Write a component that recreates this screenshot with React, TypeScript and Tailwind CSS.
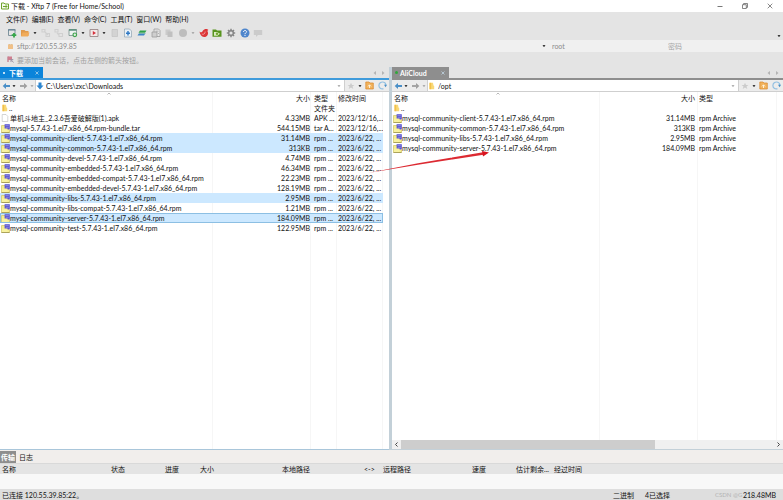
import { ReactNode } from 'react';
import { clsx } from 'clsx';

type FileEntry = {
  name: string;
  size?: string;
  type?: string;
  date?: string;
  icon: 'folder' | 'page' | 'archive';
  selected?: boolean;
  focused?: boolean;
};

const LOCAL_FILES: FileEntry[] = [
  { name: '..', type: '文件夹', icon: 'folder' },
  { name: '单机斗地主_2.3.6吾爱破解版(1).apk', size: '4.33MB', type: 'APK ...', date: '2023/12/16,...', icon: 'page' },
  { name: 'mysql-5.7.43-1.el7.x86_64.rpm-bundle.tar', size: '544.15MB', type: 'tar A...', date: '2023/12/16,...', icon: 'archive' },
  { name: 'mysql-community-client-5.7.43-1.el7.x86_64.rpm', size: '31.14MB', type: 'rpm ...', date: '2023/6/22, ...', icon: 'archive', selected: true },
  { name: 'mysql-community-common-5.7.43-1.el7.x86_64.rpm', size: '313KB', type: 'rpm ...', date: '2023/6/22, ...', icon: 'archive', selected: true },
  { name: 'mysql-community-devel-5.7.43-1.el7.x86_64.rpm', size: '4.74MB', type: 'rpm ...', date: '2023/6/22, ...', icon: 'archive' },
  { name: 'mysql-community-embedded-5.7.43-1.el7.x86_64.rpm', size: '46.34MB', type: 'rpm ...', date: '2023/6/22, ...', icon: 'archive' },
  { name: 'mysql-community-embedded-compat-5.7.43-1.el7.x86_64.rpm', size: '22.23MB', type: 'rpm ...', date: '2023/6/22, ...', icon: 'archive' },
  { name: 'mysql-community-embedded-devel-5.7.43-1.el7.x86_64.rpm', size: '128.19MB', type: 'rpm ...', date: '2023/6/22, ...', icon: 'archive' },
  { name: 'mysql-community-libs-5.7.43-1.el7.x86_64.rpm', size: '2.95MB', type: 'rpm ...', date: '2023/6/22, ...', icon: 'archive', selected: true },
  { name: 'mysql-community-libs-compat-5.7.43-1.el7.x86_64.rpm', size: '1.21MB', type: 'rpm ...', date: '2023/6/22, ...', icon: 'archive' },
  { name: 'mysql-community-server-5.7.43-1.el7.x86_64.rpm', size: '184.09MB', type: 'rpm ...', date: '2023/6/22, ...', icon: 'archive', selected: true, focused: true },
  { name: 'mysql-community-test-5.7.43-1.el7.x86_64.rpm', size: '122.95MB', type: 'rpm ...', date: '2023/6/22, ...', icon: 'archive' },
];

const REMOTE_FILES: FileEntry[] = [
  { name: '..', icon: 'folder' },
  { name: 'mysql-community-client-5.7.43-1.el7.x86_64.rpm', size: '31.14MB', type: 'rpm Archive', icon: 'archive' },
  { name: 'mysql-community-common-5.7.43-1.el7.x86_64.rpm', size: '313KB', type: 'rpm Archive', icon: 'archive' },
  { name: 'mysql-community-libs-5.7.43-1.el7.x86_64.rpm', size: '2.95MB', type: 'rpm Archive', icon: 'archive' },
  { name: 'mysql-community-server-5.7.43-1.el7.x86_64.rpm', size: '184.09MB', type: 'rpm Archive', icon: 'archive' },
];

const MENUS = ['文件(F)', '编辑(E)', '查看(V)', '命令(C)', '工具(T)', '窗口(W)', '帮助(H)'];

export default function App() {
  return (
    <div className="flex h-screen flex-col overflow-hidden bg-[#e4e4e4] font-['Lato','Noto_Sans_CJK_SC',sans-serif] text-[7px] leading-[10px] text-[#111]">
      <TitleBar />
      <nav className="flex h-[14px] shrink-0 items-center gap-[4px] pl-[6px]">
        {MENUS.map((menu) => (
          <button key={menu} className="whitespace-nowrap">
            {menu}
          </button>
        ))}
      </nav>
      <Toolbar />
      <SessionBar />
      <div className="flex h-[15px] shrink-0 items-center gap-[3px] pl-[7px] text-[#a0a0a0]">
        <FlagIcon />
        <span>要添加当前会话，点击左侧的箭头按钮。</span>
      </div>

      <main className="relative flex min-h-0 flex-1">
        <section className="flex min-w-0 flex-[389] flex-col border-b border-[#a9c6da]">
          <TabStrip title="下载" active />
          <PathBar path="C:\Users\zxc\Downloads" icon={<DownArrowIcon />} label="本地路径" />
          <div className="relative min-h-0 flex-1 bg-white pr-[6px]">
            <ColumnLines columns={['w-[213px]', 'flex-1', 'w-[26px]', 'w-[46px]']} />
            <LocalTable />
          </div>
        </section>
        <div className="w-[3px] shrink-0 bg-[#c3d0d8]" />
        <section className="flex min-w-0 flex-[391] flex-col">
          <TabStrip title="AliCloud" />
          <PathBar path="/opt" icon={<FolderIcon />} label="远程路径" />
          <div className="relative min-h-0 flex-1 bg-white">
            <ColumnLines columns={['w-[208px]', 'w-[98px]', 'flex-1']} />
            <RemoteTable />
          </div>
          <ScrollBar />
        </section>
        <DragArrow />
      </main>

      <TransferPanel />
      <StatusBar />
    </div>
  );
}

function TitleBar() {
  return (
    <header className="flex h-[12px] shrink-0 items-center bg-white">
      <AppIcon />
      <h1 className="ml-[2px] flex-1">下载 - Xftp 7 (Free for Home/School)</h1>
      <div className="flex items-center gap-[19px] pr-[10px] text-[#555]">
        <button aria-label="最小化">
          <svg className="size-[6px]" viewBox="0 0 6 6" stroke="currentColor" fill="none">
            <path d="M0.5 3.5H5.5" strokeWidth="0.8" />
          </svg>
        </button>
        <button aria-label="还原">
          <svg className="size-[6px]" viewBox="0 0 6 6" stroke="currentColor" fill="none" strokeWidth="0.7">
            <path d="M0.5 1.7H4.3V5.5H0.5ZM1.6 1.7V0.5H5.5V4.4H4.3" />
          </svg>
        </button>
        <button aria-label="关闭">
          <svg className="size-[6px]" viewBox="0 0 6 6" stroke="currentColor" fill="none" strokeWidth="0.7">
            <path d="M0.7 0.7L5.3 5.3M5.3 0.7L0.7 5.3" />
          </svg>
        </button>
      </div>
    </header>
  );
}

function Toolbar() {
  return (
    <div className="flex h-[14px] shrink-0 items-center gap-1 pl-[7px]">
      <ToolGroup>
        <ToolButton label="新建">
          <path d="M1.5 1.5H8V6.5M1.5 1.5V7.5H5" stroke="#7f949e" fill="none" />
          <path d="M1 2H8.5" stroke="#5f7f92" />
          <path d="M7 5V9.5M4.7 7.2H9.3" stroke="#35a648" strokeWidth="1.8" />
        </ToolButton>
        <ToolButton label="打开">
          <path d="M1 2H4.5L5.5 3H8.5V8H1Z" fill="#e09a4c" />
          <path d="M2.5 4.5H9.5L8 8.5H1Z" fill="#f1ab59" />
        </ToolButton>
        <Caret />
      </ToolGroup>
      <ToolGroup>
        <ToolButton label="重新连接">
          <path d="M1 1.5H4V4H1ZM5 5.5H8.5V8.5H5ZM3 3L7 7" stroke="#d0d0d0" fill="none" strokeWidth="1.1" />
        </ToolButton>
        <ToolButton label="断开">
          <path d="M1 1.5H4V4H1ZM5 5.5H8.5V8.5H5ZM3 5L5 7" stroke="#d0d0d0" fill="none" strokeWidth="1.1" />
        </ToolButton>
      </ToolGroup>
      <ToolGroup>
        <ToolButton label="属性">
          <path d="M1 1.5H8.5V7.5H1Z" fill="#eef3f2" stroke="#77918b" strokeWidth="0.8" />
          <path d="M1 2H8.5" stroke="#4f8a75" strokeWidth="1.4" />
          <circle cx="6.8" cy="6.8" r="1.8" fill="#dff0df" stroke="#3fa34e" strokeWidth="1.2" />
        </ToolButton>
        <Caret />
      </ToolGroup>
      <ToolGroup>
        <ToolButton label="执行">
          <path d="M1 1.5H9V8.5H1Z" fill="#f3e8e8" stroke="#9a8888" strokeWidth="0.9" />
          <path d="M3.8 3V7L7 5Z" fill="#d5303b" />
        </ToolButton>
        <Caret />
      </ToolGroup>
      <ToolGroup>
        <ToolButton label="复制">
          <path d="M2 1.5H7.5V8.5H2Z" fill="#d3d3d3" stroke="#c3c3c3" strokeWidth="0.7" />
        </ToolButton>
        <ToolButton label="传输">
          <path d="M1.5 1H6.5L8.5 3V9H1.5Z" fill="#e9f1f7" stroke="#8fa3b2" strokeWidth="0.7" />
          <path d="M5 3V7.5M3 5.2H7" stroke="#2f78c4" strokeWidth="1.4" />
        </ToolButton>
      </ToolGroup>
      <ToolGroup>
        <ToolButton label="同步">
          <path d="M3 2.5H9.5L8 4.8H1.5Z" fill="#2ea04a" />
          <path d="M2 5.3H8.5L7 7.6H0.5Z" fill="#3f86c7" />
          <path d="M2 5.3H8.5" stroke="#8fc79c" strokeWidth="0.6" />
        </ToolButton>
      </ToolGroup>
      <ToolGroup>
        <ToolButton label="粘贴">
          <path d="M3 1H7.5L9 2.5V8.5H3Z" fill="#e6e6e6" stroke="#9c9c9c" strokeWidth="0.8" />
          <path d="M1 4H6V9H1Z" fill="#cfcfcf" stroke="#9c9c9c" strokeWidth="0.8" />
          <path d="M4.5 3.2H7.5M7 5.5H8" stroke="#a5a5a5" strokeWidth="0.8" />
        </ToolButton>
        <ToolButton label="删除">
          <path d="M1.5 1.5H6.5V7H1.5Z" fill="#cbcbcb" />
          <path d="M3.5 3.5H8.5V9H3.5Z" fill="#c0c0c0" />
        </ToolButton>
      </ToolGroup>
      <ToolGroup>
        <ToolButton label="停止">
          <circle cx="5" cy="5" r="4" fill="#bdbdbd" />
        </ToolButton>
        <Caret muted />
      </ToolGroup>
      <ToolGroup>
        <ToolButton label="Xshell">
          <path d="M0.5 3.5C2 5 3 4.5 4 2.5C5.2 0.5 8.4 0.4 9.5 2C8.2 2.2 8.4 3.4 9 4.5C9.4 7.2 7.4 9.2 5 9C2.5 8.8 0.8 6.5 0.5 3.5Z" fill="#dc3537" />
          <path d="M2.8 6C4.5 7 6.2 5.8 6.2 3.5" stroke="#f4b5b3" strokeWidth="0.7" fill="none" />
        </ToolButton>
        <ToolButton label="Xftp">
          <path d="M0.5 1.5H4L5 2.5H9.5V8.8H0.5Z" fill="#58941f" />
          <path d="M2 4H5L8 5.8L5.5 7.8H2Z" fill="#dcecc4" />
          <circle cx="5" cy="5.7" r="1.2" fill="#6ea52c" />
        </ToolButton>
      </ToolGroup>
      <ToolGroup>
        <ToolButton label="选项">
          <path d="M5 0.8V9.2M0.8 5H9.2M2 2L8 8M8 2L2 8" stroke="#868686" strokeWidth="1.5" />
          <circle cx="5" cy="5" r="3" fill="#868686" />
          <circle cx="5" cy="5" r="1.6" fill="#e4e4e4" />
        </ToolButton>
      </ToolGroup>
      <ToolGroup>
        <ToolButton label="帮助">
          <circle cx="5" cy="5" r="4.5" fill="#4f86cc" />
          <path d="M3.5 4C3.5 2 6.6 2 6.5 3.9C6.4 4.9 5 4.9 5 6.2M5 7V8" stroke="#fff" strokeWidth="1" fill="none" />
        </ToolButton>
        <ToolButton label="反馈">
          <path d="M0.8 2H9.2V7H5L3 9V7H0.8Z" fill="#cbcbcb" />
        </ToolButton>
      </ToolGroup>
      <div className="ml-auto self-end pr-[2px] pb-[2px]">
        <Caret />
      </div>
    </div>
  );
}

function ToolGroup({ children }: { children: ReactNode }) {
  return <div className="flex items-center gap-[3px]">{children}</div>;
}

function ToolButton({ label, children }: { label: string; children: ReactNode }) {
  return (
    <button aria-label={label}>
      <svg className="size-[10px]" viewBox="0 0 10 10">
        {children}
      </svg>
    </button>
  );
}

function Caret({ muted = false }: { muted?: boolean }) {
  return (
    <svg className={clsx('w-1 h-1 shrink-0', muted ? 'text-[#999]' : 'text-black')} viewBox="0 0 4 4">
      <path d="M0.5 1.2H3.5L2 3Z" fill="currentColor" />
    </svg>
  );
}

function SessionBar() {
  return (
    <form className="flex h-[12px] shrink-0 items-center bg-[#f0f0f0]">
      <div className="flex flex-1 items-center gap-[4px] pl-[8px]">
        <svg className="size-[5px] shrink-0" viewBox="0 0 5 5">
          <path d="M0 1H5V5H0Z" fill="#f0c088" />
          <path d="M1 1V0H4V1" fill="none" stroke="#e0b070" />
        </svg>
        <input
          aria-label="主机"
          defaultValue="sftp://120.55.39.85"
          className="h-[10px] min-w-0 flex-1 text-[#8c8c8c] outline-none"
        />
        <Caret />
      </div>
      <input aria-label="用户名" placeholder="root" className="h-[10px] w-[118px] pl-[6px] outline-none placeholder:text-[#8c8c8c]" />
      <input aria-label="密码" type="password" placeholder="密码" className="h-[10px] w-[119px] pl-[4px] outline-none placeholder:text-[#a5a5a5]" />
    </form>
  );
}

function TabStrip({ title, active = false }: { title: string; active?: boolean }) {
  return (
    <div
      className={clsx(
        'flex h-[13px] shrink-0 items-stretch border-b-2',
        active ? 'border-[#3f9bdb]' : 'border-[#8e8e8e]',
      )}
    >
      <div
        className={clsx(
          'flex items-center pl-[3px] font-bold text-white',
          active ? 'w-[43px] bg-[#0b84da]' : 'w-[57px] bg-[#8e8e8e]',
        )}
      >
        <span className={clsx('rounded-full', active ? 'mr-[4px] size-[2px] bg-white' : 'mr-[2px] size-[3px] bg-[#2fa83c]')} />
        <button className="flex-1 text-left">{title}</button>
        <button aria-label="关闭标签" className="pr-[4px]">
          <svg className="size-[4px]" viewBox="0 0 4 4" stroke="#c5dced" strokeWidth="0.7">
            <path d="M0.5 0.5L3.5 3.5M3.5 0.5L0.5 3.5" />
          </svg>
        </button>
      </div>
      <div className="ml-auto flex items-center gap-[4px] pr-[4px] text-[#b4b4b4]">
        <button aria-label="上一个标签">
          <svg className="size-[4px]" viewBox="0 0 4 4">
            <path d="M3 0V4L0.5 2Z" fill="currentColor" />
          </svg>
        </button>
        <button aria-label="下一个标签">
          <svg className="size-[4px]" viewBox="0 0 4 4">
            <path d="M1 0V4L3.5 2Z" fill="currentColor" />
          </svg>
        </button>
      </div>
    </div>
  );
}

function PathBar({ path, icon, label }: { path: string; icon: ReactNode; label: string }) {
  return (
    <div className="flex h-[12px] shrink-0 items-center border-b border-[#cfcfcf] bg-[#ececec]">
      <div className="flex items-center gap-[2px] pl-[2px]">
        <button aria-label="后退">
          <svg className="size-[8px]" viewBox="0 0 8 8">
            <path d="M4 1L0.7 4L4 7Z" fill="#4a8fc7" />
            <path d="M3 4H8" stroke="#4a8fc7" strokeWidth="2" />
          </svg>
        </button>
        <Caret />
        <button aria-label="前进" className="ml-[2px]">
          <svg className="size-[8px]" viewBox="0 0 8 8">
            <path d="M4 1L7.3 4L4 7Z" fill="#9c9c9c" />
            <path d="M5 4H0" stroke="#a5a5a5" strokeWidth="2" />
          </svg>
        </button>
        <Caret muted />
      </div>
      <div className="ml-px flex h-full min-w-0 flex-1 items-center gap-[2px] border-x border-[#cfcfcf] bg-white pr-[3px]">
        {icon}
        <input aria-label={label} defaultValue={path} className="h-[10px] min-w-0 flex-1 outline-none" />
        <Caret muted />
      </div>
      <div className="flex items-center gap-[3px] px-[2px]">
        <button aria-label="收藏">
          <svg className="size-[8px]" viewBox="0 0 8 8">
            <path d="M4 0.8L5 3H7.4L5.5 4.6L6.3 7.1L4 5.6L1.7 7.1L2.5 4.6L0.6 3H3Z" fill="#cbcbcb" />
          </svg>
        </button>
        <Caret />
        <button aria-label="上级目录">
          <svg className="size-[9px]" viewBox="0 0 9 9">
            <path d="M0.8 1H4L5 2H8.3V8H0.8Z" fill="#f1b25c" stroke="#d8872c" strokeWidth="0.7" />
            <path d="M4.5 7V4M3 5.4L4.5 3.8L6 5.4" stroke="#fff6e3" strokeWidth="0.9" fill="none" />
          </svg>
        </button>
        <button aria-label="刷新" className="ml-px">
          <svg className="size-[9px]" viewBox="0 0 9 9">
            <path d="M5.5 7.7C3 8.5 0.8 6.8 0.9 4.4C1 2 3 0.8 5 1C6.8 1.2 7.8 2.5 7.8 4.2" stroke="#93c0e2" strokeWidth="1.2" fill="none" />
            <path d="M6 3.8H9L7.6 6.2Z" fill="#4a8fc7" />
          </svg>
        </button>
      </div>
    </div>
  );
}

/* Faint rules that run the full height behind a file list */
function ColumnLines({ columns }: { columns: string[] }) {
  return (
    <div className="absolute inset-y-0 left-0 right-[6px] flex" aria-hidden="true">
      {columns.map((width, index) => (
        <div key={index} className={clsx('border-r border-[#f6f6f6]', width)} />
      ))}
    </div>
  );
}

function SortMark() {
  return (
    <svg className="absolute top-0 left-1/2 h-[3px] w-[4px]" viewBox="0 0 4 3">
      <path d="M0.5 2.5L2 1L3.5 2.5" stroke="#999" strokeWidth="0.7" fill="none" />
    </svg>
  );
}

function LocalTable() {
  return (
    <table className="relative w-full table-fixed whitespace-nowrap">
      <colgroup>
        <col className="w-[213px]" />
        <col />
        <col className="w-[25px]" />
        <col className="w-[46px]" />
      </colgroup>
      <thead>
        <tr className="h-[11px] text-left">
          <th className="relative p-0 pl-[2px] font-normal">
            名称
            <SortMark />
          </th>
          <th className="p-0 pr-[2px] text-right font-normal">大小</th>
          <th className="p-0 pl-[2px] font-normal">类型</th>
          <th className="p-0 pl-[1px] font-normal">修改时间</th>
        </tr>
      </thead>
      <tbody>
        {LOCAL_FILES.map((file) => (
          <tr
            key={file.name}
            className={clsx(
              'h-[10px]',
              file.selected && 'bg-[#cce8ff]',
              file.focused && 'outline outline-1 -outline-offset-1 outline-[#8cbfe3]',
            )}
          >
            <td className="p-0">
              <FileName file={file} />
            </td>
            <td className="p-0 pr-[2px] text-right">{file.size}</td>
            <td className="p-0 pl-[2px]">{file.type}</td>
            <td className="overflow-hidden p-0 pl-[1px]">{file.date}</td>
          </tr>
        ))}
      </tbody>
    </table>
  );
}

function RemoteTable() {
  return (
    <table className="relative w-full table-fixed whitespace-nowrap">
      <colgroup>
        <col className="w-[208px]" />
        <col className="w-[97px]" />
        <col />
      </colgroup>
      <thead>
        <tr className="h-[11px] text-left">
          <th className="relative p-0 pl-[2px] font-normal">
            名称
            <SortMark />
          </th>
          <th className="p-0 pr-[2px] text-right font-normal">大小</th>
          <th className="p-0 pl-[2px] font-normal">类型</th>
        </tr>
      </thead>
      <tbody>
        {REMOTE_FILES.map((file) => (
          <tr key={file.name} className="h-[10px]">
            <td className="p-0">
              <FileName file={file} />
            </td>
            <td className="p-0 pr-[2px] text-right">{file.size}</td>
            <td className="p-0 pl-[2px]">{file.type}</td>
          </tr>
        ))}
      </tbody>
    </table>
  );
}

function FileName({ file }: { file: FileEntry }) {
  return (
    <span className="flex h-[10px] items-center pl-[1px]">
      {file.icon === 'folder' && <FolderIcon />}
      {file.icon === 'page' && <PageIcon />}
      {file.icon === 'archive' && <ArchiveIcon />}
      {file.name}
    </span>
  );
}

function ScrollBar() {
  return (
    <div className="flex h-[10px] shrink-0 items-center border-b border-[#c3d0d8] bg-[#f0f0f0] text-[#444]">
      <button aria-label="向左滚动" className="flex w-[9px] justify-center">
        <svg className="size-[5px]" viewBox="0 0 5 5">
          <path d="M3.5 0.5L1.5 2.5L3.5 4.5" stroke="currentColor" fill="none" />
        </svg>
      </button>
      <div className="h-full flex-1">
        <div className="h-full w-[68%] bg-[#cdcdcd]" />
      </div>
      <button aria-label="向右滚动" className="flex w-[9px] justify-center">
        <svg className="size-[5px]" viewBox="0 0 5 5">
          <path d="M1.5 0.5L3.5 2.5L1.5 4.5" stroke="currentColor" fill="none" />
        </svg>
      </button>
    </div>
  );
}

function DragArrow() {
  return (
    <svg className="pointer-events-none absolute top-[84px] left-[368px] h-[22px] w-[121px]" viewBox="0 0 121 22">
      <path d="M0 22L50 12.2L115 1.2L115.5 3.8L50 13.8Z" fill="#dc2a32" />
      <path d="M114 0L121 1.5L115 5.5Z" fill="#d8141f" />
    </svg>
  );
}

function TransferPanel() {
  return (
    <section className="shrink-0 bg-[#f8f8f8]">
      <div className="flex h-[13px] items-center bg-[#f1eeec] pt-px">
        <button className="h-full w-[16px] bg-[#8e8e8e] font-bold text-white">传输</button>
        <button className="pl-[3px]">日志</button>
      </div>
      <table className="w-full table-fixed border-t border-[#d9d9d9] text-left whitespace-nowrap">
        <colgroup>
          <col className="w-[109px]" />
          <col className="w-[54px]" />
          <col className="w-[35px]" />
          <col className="w-[82px]" />
          <col className="w-[82px]" />
          <col className="w-[19px]" />
          <col className="w-[89px]" />
          <col className="w-[44px]" />
          <col className="w-[38px]" />
          <col />
        </colgroup>
        <thead>
          <tr className="h-[11px] bg-[#e4e4e4]">
            {['名称', '状态', '进度', '大小', '本地路径', '<->', '远程路径', '速度', '估计剩余...', '经过时间'].map((title) => (
              <th key={title} className="p-0 pl-[2px] font-normal">
                {title}
              </th>
            ))}
          </tr>
        </thead>
      </table>
      <div className="h-[15px]" />
    </section>
  );
}

function StatusBar() {
  return (
    <footer className="flex h-[11px] shrink-0 items-center bg-[#dedede] pl-[2px] whitespace-nowrap">
      <span className="flex-1">已连接 120.55.39.85:22。</span>
      <span className="w-[32px]">二进制</span>
      <span className="w-[70px]">4已选择</span>
      <span className="w-[28px] text-[6px] text-[#b4b4b4]">CSDN @G</span>
      <span className="w-[40px]">218.48MB</span>
    </footer>
  );
}

function AppIcon() {
  return (
    <svg className="ml-[1px] size-[8px] shrink-0" viewBox="0 0 8 8">
      <path d="M0.5 1H3L4 2H7.5V7H0.5Z" fill="#f5faee" stroke="#6fa42c" />
      <path d="M2 4.5H6M4.8 3.2L6 4.5L4.8 5.8" stroke="#6fa42c" fill="none" />
    </svg>
  );
}

function FlagIcon() {
  return (
    <svg className="size-[7px] shrink-0" viewBox="0 0 7 7">
      <path d="M1 0.5V6" stroke="#b55b70" />
      <path d="M1 0.5H5V4H1Z" fill="#cf7f90" />
      <path d="M4 3.5L6.5 6.5M4 6V3.5H6.3" stroke="#9a8fa0" fill="none" strokeWidth="0.9" />
    </svg>
  );
}

function DownArrowIcon() {
  return (
    <svg className="size-[8px] shrink-0" viewBox="0 0 8 8">
      <path d="M2.5 0.5H5.5V3.5H7.5L4 7.5L0.5 3.5H2.5Z" fill="#2f86cf" />
    </svg>
  );
}

function FolderIcon() {
  return (
    <svg className="size-[8px] shrink-0" viewBox="0 0 8 8">
      <path d="M1.5 0.8H5L5.5 3.5L6.2 4V7.2H1.5Z" fill="#f9d978" />
      <path d="M1.5 0.8H3.2V7.2H1.5Z" fill="#f2c04b" />
    </svg>
  );
}

function PageIcon() {
  return (
    <svg className="mr-px size-[8px] shrink-0" viewBox="0 0 8 8">
      <path d="M1.2 0.5H5L6.8 2.3V7.5H1.2Z" fill="#fff" stroke="#b9b9b9" strokeWidth="0.6" />
    </svg>
  );
}

function ArchiveIcon() {
  return (
    <svg className="size-[9px] shrink-0" viewBox="0 0 9 9">
      <path d="M0.5 1.5H4L8.5 6V8.5H0.5Z" fill="#f5ee8f" stroke="#c9bd54" strokeWidth="0.6" />
      <path d="M3.6 0.2H8.8V5.4H3.6Z" fill="#5a55cf" />
      <path d="M4.4 1.6H7.8M4.8 3.3H7.8" stroke="#a9a5ec" strokeWidth="0.6" />
      <path d="M1 4.5H6.5V8.2H1Z" fill="#f8f2a0" />
      <path d="M0.5 8.6H8.5" stroke="#8e8440" strokeWidth="0.7" />
    </svg>
  );
}
